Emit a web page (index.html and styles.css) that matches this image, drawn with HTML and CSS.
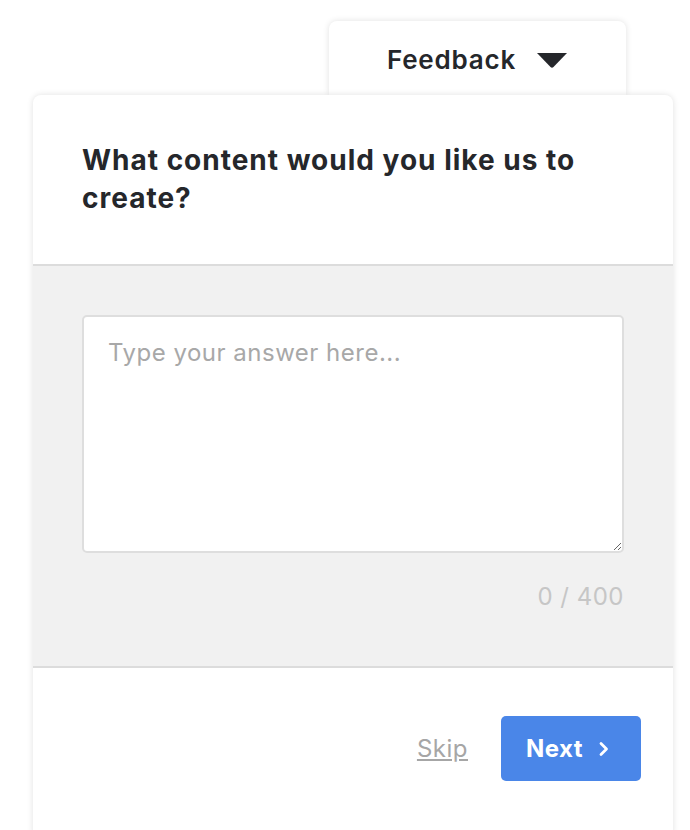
FILE: index.html
```html
<!DOCTYPE html>
<html lang="en">
<head>
    <meta charset="UTF-8">
    <title>Feedback</title>
    <link rel="stylesheet" href="styles.css">
</head>
<body>
    <div class="widget">
        <div class="tab">
            <span>Feedback</span>
            <svg class="caret" width="32" height="16" viewBox="0 0 32 16">
                <path d="M1 1 H31 L17.5 15 Q16 16.5 14.5 15 Z" fill="#25272b"/>
            </svg>
        </div>
        <div class="panel">
            <div class="question">
                <h2>What content would you like us to create?</h2>
            </div>
            <div class="answer">
                <textarea placeholder="Type your answer here..." maxlength="400"></textarea>
                <div class="counter">0 / 400</div>
            </div>
            <div class="actions">
                <a href="#" class="skip">Skip</a>
                <button type="button" class="next">
                    Next
                    <svg width="12" height="16" viewBox="0 0 12 16">
                        <path d="M3 2.5 L8.5 8 L3 13.5" fill="none" stroke="#fff" stroke-width="2.8" stroke-linecap="round" stroke-linejoin="round"/>
                    </svg>
                </button>
            </div>
        </div>
    </div>
</body>
</html>
```

FILE: styles.css
```css
body {
    margin: 0;
    background: #fff;
    font-family: Inter, "Noto Sans", sans-serif;
    color: #25272b;
}

.widget {
    width: 640px;
    padding: 21px 0 0 33px;
}

.tab {
    margin-left: 296px;
    width: 297px;
    height: 74px;
    background: #fff;
    border-radius: 8px 8px 0 0;
    box-shadow: 0 0 6px rgba(0, 0, 0, 0.12);
    display: flex;
    align-items: center;
    justify-content: center;
    gap: 20px;
    font-size: 26px;
    font-weight: 600;
    letter-spacing: 0.8px;
    position: relative;
    z-index: 1;
    padding-top: 2px;
    box-sizing: border-box;
}

.tab .caret {
    margin-top: 2px;
}

.panel {
    background: #fff;
    border-radius: 8px 8px 0 0;
    box-shadow: 0 0 6px rgba(0, 0, 0, 0.12);
    position: relative;
    z-index: 2;
    height: 740px;
}

.question {
    padding: 46px 49px 47px;
    border-bottom: 2px solid #dcdcdc;
}

.question h2 {
    margin: 0;
    font-size: 28px;
    line-height: 38px;
    font-weight: 700;
    letter-spacing: 1px;
}

.answer {
    background: #f1f1f1;
    padding: 49px 49px 55px;
    border-bottom: 2px solid #dcdcdc;
}

.answer textarea {
    display: block;
    width: 100%;
    height: 238px;
    box-sizing: border-box;
    border: 2px solid #dedede;
    border-radius: 5px;
    padding: 21px 24px;
    font-family: Inter, "Noto Sans", sans-serif;
    font-size: 24px;
    letter-spacing: 0.5px;
    color: #25272b;
    background: #fff;
}

.answer textarea::placeholder {
    color: #a8a8a8;
}

.counter {
    margin-top: 29px;
    text-align: right;
    font-size: 24px;
    letter-spacing: 0.5px;
    color: #c6c6c6;
}

.actions {
    display: flex;
    justify-content: flex-end;
    align-items: center;
    gap: 33px;
    padding: 48px 32px 0 0;
}

.skip {
    color: #a6a6a6;
    font-size: 24px;
    letter-spacing: 0.5px;
}

.next {
    width: 140px;
    height: 65px;
    background: #4a86e8;
    color: #fff;
    border: none;
    border-radius: 5px;
    font-family: Inter, "Noto Sans", sans-serif;
    font-size: 24px;
    font-weight: 700;
    letter-spacing: 0.5px;
    display: flex;
    align-items: center;
    gap: 15px;
    padding: 0 0 0 25px;
    cursor: pointer;
}
```
